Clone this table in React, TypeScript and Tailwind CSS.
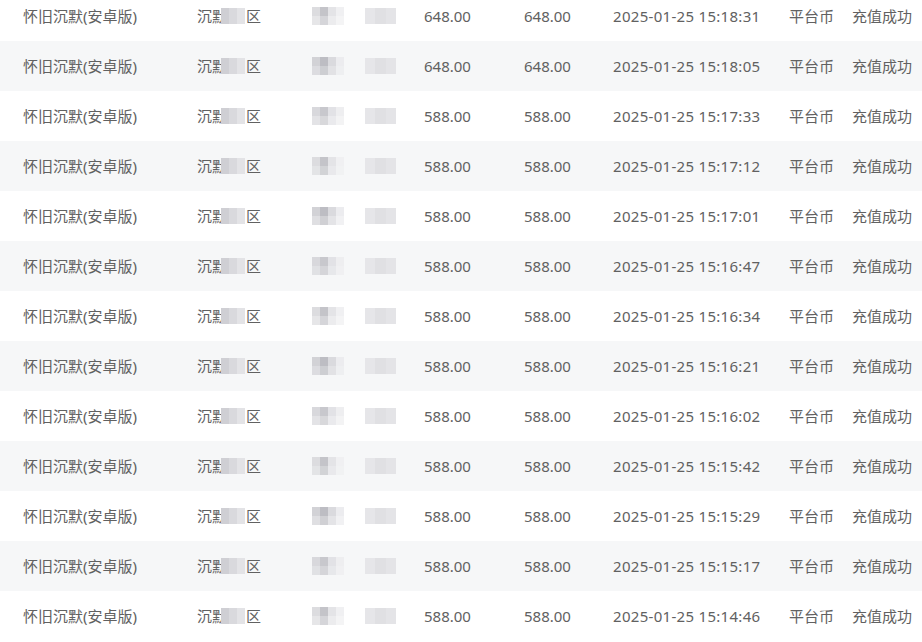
const times = [
  '15:18:31', '15:18:05', '15:17:33', '15:17:12', '15:17:01', '15:16:47', '15:16:34',
  '15:16:21', '15:16:02', '15:15:42', '15:15:29', '15:15:17', '15:14:46',
];

const shadesA = [
  ['#dcdcdf', '#c4c4c9', '#e4e4e7', '#f0f0f2'],
  ['#d2d2d6', '#bdbdc3', '#dadade', '#ececef'],
  ['#d8d8dc', '#c8c8cd', '#e2e2e6', '#eeeef0'],
];

function Mosaic({ cells, h }: { cells: string[]; h: number }) {
  return (
    <div className="flex flex-col">
      <div className="flex">
        {cells.map((c, i) => (
          <div key={i} className="w-[8px]" style={{ height: h / 2, backgroundColor: c }} />
        ))}
      </div>
      <div className="flex opacity-70">
        {cells.map((c, i) => (
          <div key={i} className="w-[8px]" style={{ height: h / 2, backgroundColor: c }} />
        ))}
      </div>
    </div>
  );
}

function Row({ i, time }: { i: number; time: string }) {
  const amount = i < 2 ? '648.00' : '588.00';
  const shade = shadesA[i % 3];
  return (
    <div className={`h-[50px] grid grid-cols-[174px_115px_112px_100px_89px_176px_63px_1fr] items-center pl-[23px] ${i % 2 === 1 ? 'bg-[#f6f7f8]' : 'bg-white'}`}>
      <div className="whitespace-nowrap">怀旧沉默(安卓版)</div>
      <div className="flex items-center whitespace-nowrap">
        <span>沉默</span>
        <div className="-ml-[6px] mr-[1px] flex h-[16px]">
          <div className="w-[8px] bg-[#cfcfd4]" />
          <div className="w-[8px] bg-[#d9d9dd]" />
          <div className="w-[8px] bg-[#e3e3e6]" />
        </div>
        <span>区</span>
      </div>
      <div className="flex items-center">
        <Mosaic cells={shade} h={18} />
        <div className="ml-[21px] flex h-[16px]">
          <div className="w-[10px] bg-[#e6e6e9]" />
          <div className="w-[11px] bg-[#e0e0e3]" />
          <div className="w-[10px] bg-[#e4e4e7]" />
        </div>
      </div>
      <div>{amount}</div>
      <div>{amount}</div>
      <div className="whitespace-nowrap tracking-[0.3px]">2025-01-25 {time}</div>
      <div className="whitespace-nowrap">平台币</div>
      <div className="whitespace-nowrap">充值成功</div>
    </div>
  );
}

export default function App() {
  return (
    <div
      className="w-[922px] h-[642px] overflow-hidden bg-white text-[15px] text-[#616161]"
      style={{ fontFamily: '"Noto Sans", "Noto Sans CJK SC", sans-serif' }}
    >
      <div className="-mt-[9px]">
        {times.map((t, i) => (
          <Row key={i} i={i} time={t} />
        ))}
      </div>
    </div>
  );
}
